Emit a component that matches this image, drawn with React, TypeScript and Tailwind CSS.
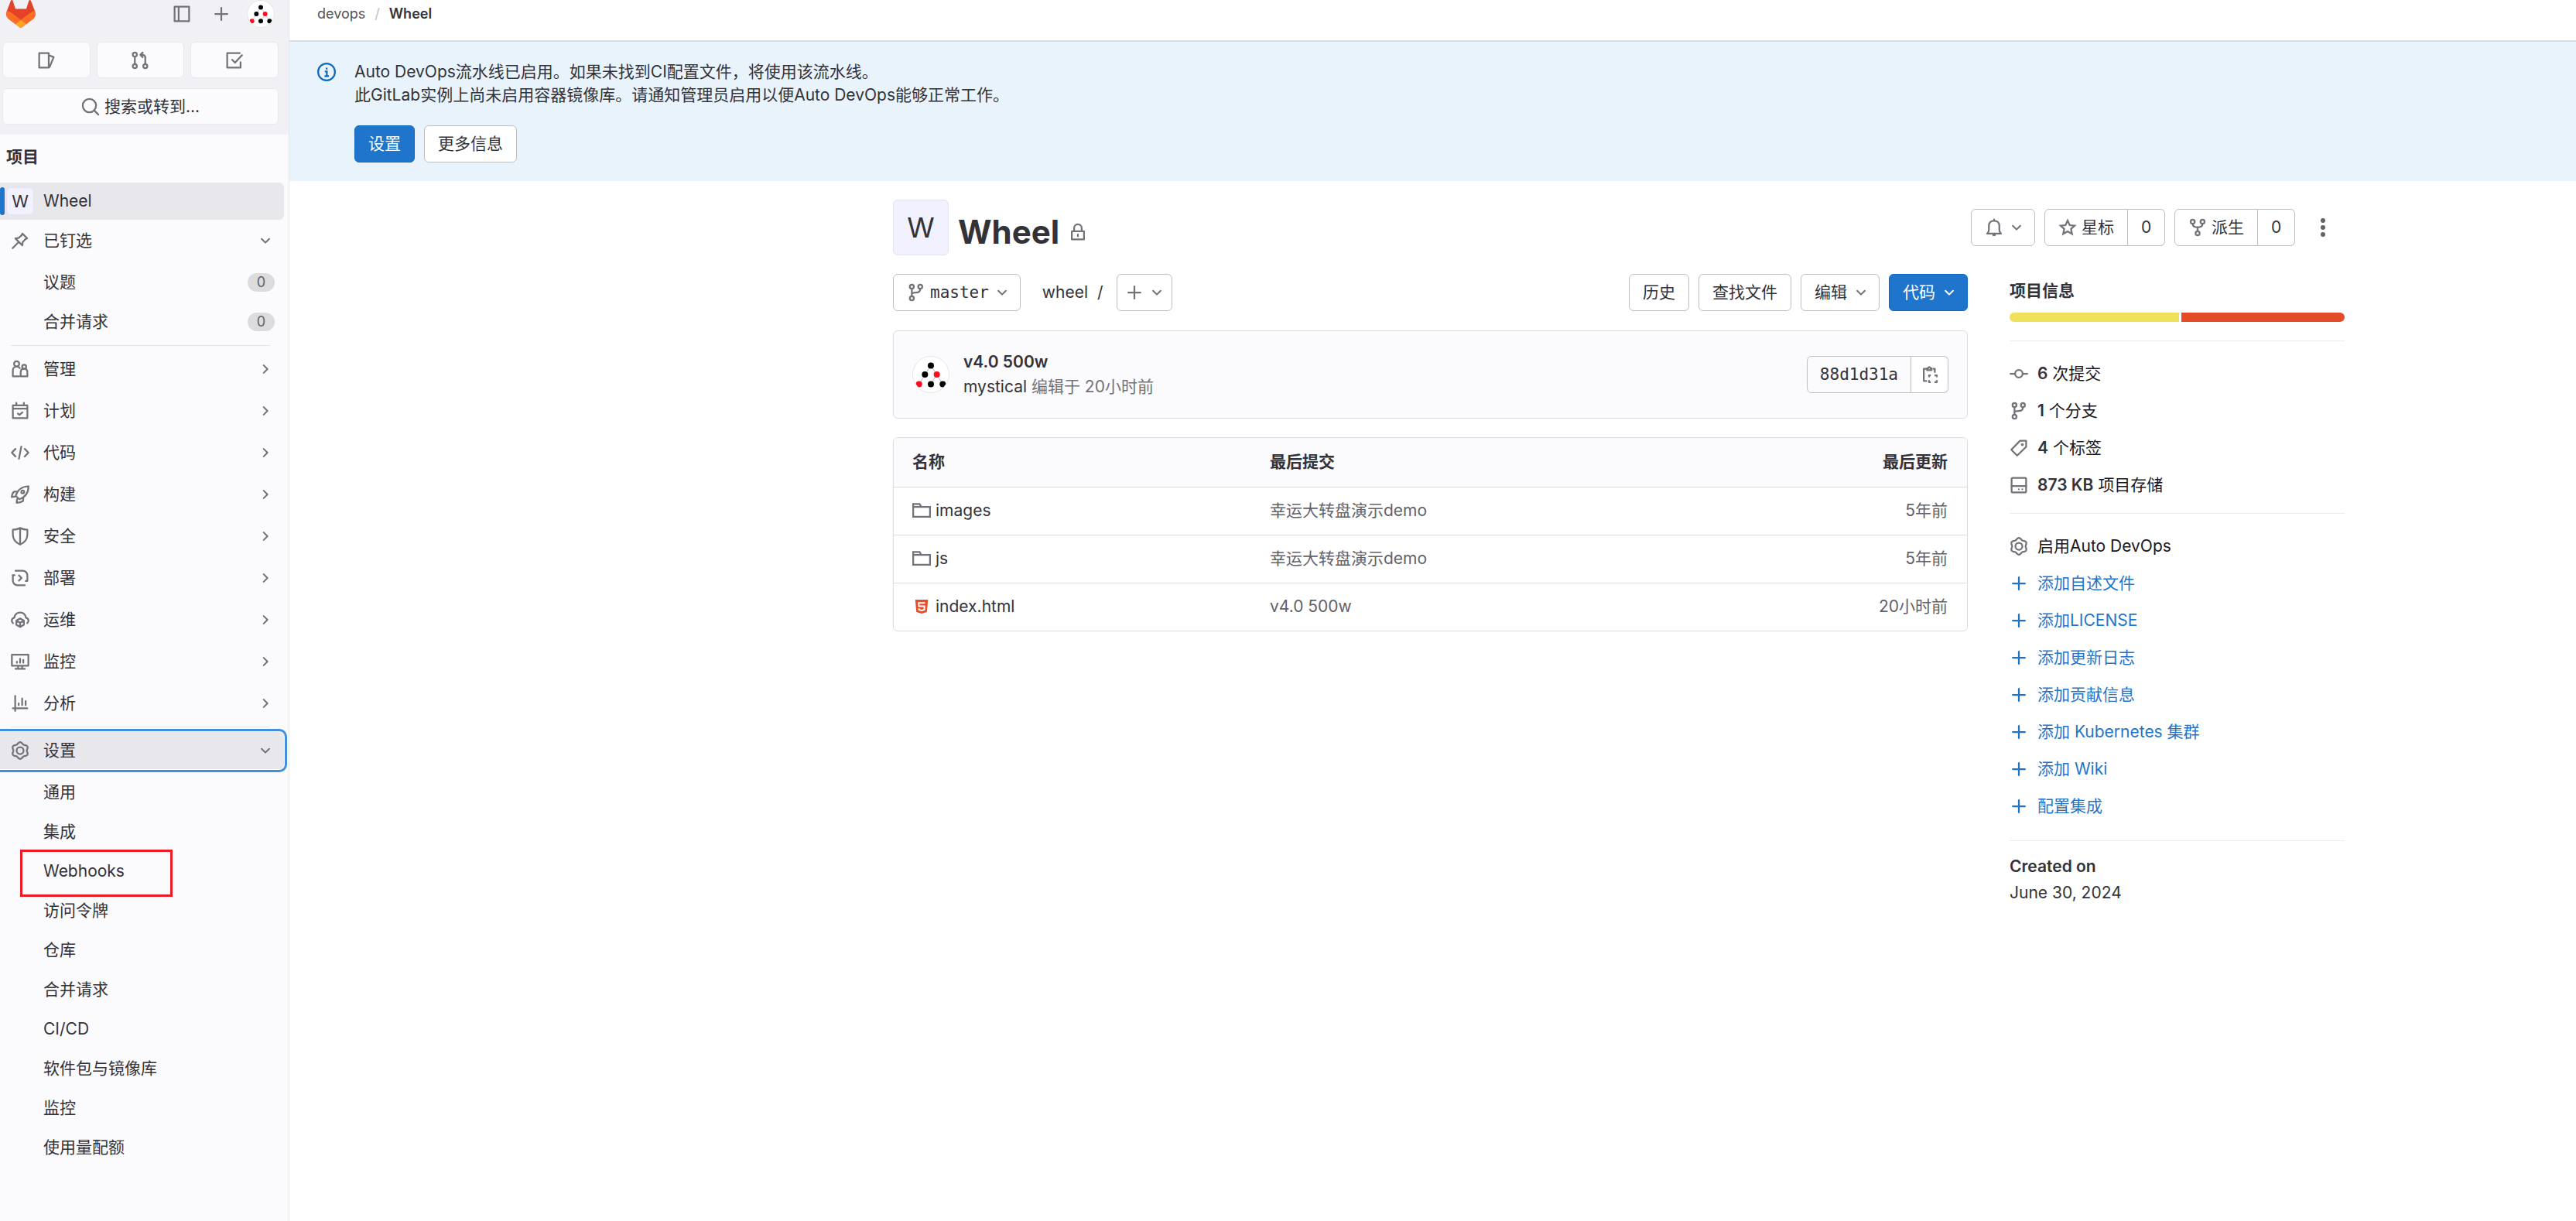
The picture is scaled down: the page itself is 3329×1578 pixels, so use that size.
import type { ReactNode } from "react";

type IconProps = { className?: string; children: ReactNode; box?: string };

function Icon({ className = "size-6", children, box = "0 0 16 16" }: IconProps) {
  return (
    <svg
      className={`shrink-0 ${className}`}
      viewBox={box}
      fill="none"
      stroke="currentColor"
      strokeWidth="1.5"
      strokeLinecap="round"
      strokeLinejoin="round"
      aria-hidden="true"
    >
      {children}
    </svg>
  );
}

const ChevronDown = () => (
  <Icon className="size-[18px]" box="0 0 12 12">
    <path d="M2.75 4.5 6 7.75 9.25 4.5" strokeWidth="1.4" />
  </Icon>
);
const ChevronRight = () => (
  <Icon className="size-[18px]" box="0 0 12 12">
    <path d="M4.5 2.75 7.75 6 4.5 9.25" strokeWidth="1.4" />
  </Icon>
);
const Plus = () => (
  <Icon>
    <path d="M8 2.75v10.5M2.75 8h10.5" />
  </Icon>
);

// Six-lobed outline, one lobe pointing straight up.
const gearOutline = Array.from({ length: 72 }, (_, i) => {
  const angle = (i * Math.PI) / 36;
  const radius = 6.5 + 0.7 * Math.cos(6 * angle);
  return `${(8 + radius * Math.sin(angle)).toFixed(2)},${(8 - radius * Math.cos(angle)).toFixed(2)}`;
}).join(" ");

const Gear = () => (
  <Icon>
    <circle cx="8" cy="8" r="3" />
    <polygon points={gearOutline} />
  </Icon>
);
const Branch = () => (
  <Icon>
    <circle cx="4.25" cy="3" r="1.75" />
    <circle cx="11.5" cy="3" r="1.75" />
    <circle cx="4.25" cy="13" r="1.75" />
    <path d="M4.25 4.75v6.500M11.500 4.750c0 3-1.500 3.250-4 3.250-1.700 0-3 .3-3.250 1.500" />
  </Icon>
);

const navIcons = {
  pin: (
    <Icon>
      <path d="M10 1.900 14.100 6l-1.500.7-2.400 2.700-.3 2.700L3.900 6.100l2.700-.3 2.700-2.400zM6.500 9.500l-5 5" />
    </Icon>
  ),
  manage: (
    <Icon>
      <circle cx="5" cy="3.500" r="2.250" />
      <path d="M7.250 14.250H1.750V9.100C1.750 7 3.200 5.750 5 5.750c1.200 0 2.200.5 2.750 1.450" />
      <circle cx="11.500" cy="6" r="1.750" />
      <path d="M8.500 14.250V10.500c0-1.700 1.200-2.750 2.900-2.750s2.850 1.050 2.850 2.750v3.750z" />
    </Icon>
  ),
  plan: (
    <Icon>
      <path d="M1.750 3.250h12.500v11H1.750zM1.750 6h12.500M4.750 1v2M11.250 1v2M6 10.250l1.400 1.250L10 9.250" />
    </Icon>
  ),
  code: (
    <Icon>
      <path d="M4 4.750.9 8 4 11.250M12 4.750 15.100 8 12 11.250M9 2.750l-2 10.500" />
    </Icon>
  ),
  build: (
    <Icon>
      <path d="M4.200 9.200c1.300-4.200 4.500-8 11-8.200 0 5.800-3.400 9.600-8 11.200zM5.700 5.500H3C1.500 6.500 1 8.300.8 10.300l3-.6M10.800 10.200l-.3 3.500c-1.500 1-3.500 1.400-5.500 1.500l.3-3" />
      <circle cx="10.250" cy="5.900" r="1.250" />
    </Icon>
  ),
  secure: (
    <Icon>
      <path d="M8 .9c2 .9 4 1.400 6.250 1.500v4.100c0 4-2.500 7-6.250 8.700-3.750-1.700-6.250-4.700-6.250-8.700V2.400C4 2.300 6 1.800 8 .9zM8 1v14" />
    </Icon>
  ),
  deploy: (
    <Icon>
      <path d="M4 1.750h6.250a4 4 0 0 1 4 4V10.500h-1.500M1.500 5.500h.25v4.750a4 4 0 0 0 4 4H12M1.750 5.500H3.200M7 5.750 9.250 8 7 10.250" />
    </Icon>
  ),
  operate: (
    <Icon>
      <path d="M1.900 10.900C.2 9.500.5 6.700 3 6.200 3.500 3.300 5.400 1.750 8 1.750s4.500 1.550 5 4.450c2.500.5 2.800 3.300 1.100 4.700M8 6.900l3.250 1.700v3.800L8 14.200l-3.250-1.800V8.600zM4.900 8.800 8 10.500l3.100-1.700M8 10.500v3.500" />
    </Icon>
  ),
  monitor: (
    <Icon>
      <path d="M.9 2h14.200v9.500H.9zM6.250 11.500v2.600M9.750 11.500v2.600M4 14.250h8M5.250 8v1M8 5.500V9M10.750 6.500V9" />
    </Icon>
  ),
  analyze: (
    <Icon>
      <path d="M3.750 1.500v13M1.750 12.250h12.500M6.750 8v1.500M9.750 3.750V9.500M12.750 6v3.500" />
    </Icon>
  ),
  settings: <Gear />,
};

function TreeAvatar({ className }: { className: string }) {
  return (
    <span className={`block shrink-0 overflow-hidden rounded-full border border-[#e6e6ea] bg-white ${className}`}>
      <svg viewBox="0 0 48 48" className="size-full" role="img" aria-label="mystical">
        <path d="M24 12 8 37M24 12l16 25M32 24l-8 13" stroke="#9fa6b8" strokeWidth="0.8" fill="none" />
        <circle cx="24" cy="12" r="4.200" />
        <circle cx="16" cy="24" r="4.200" />
        <circle cx="32" cy="24" r="4.200" fill="#ff0a1e" />
        <circle cx="8" cy="37" r="4.200" fill="#ff0a1e" />
        <circle cx="24" cy="37" r="4.200" />
        <circle cx="40" cy="37" r="4.200" />
      </svg>
    </span>
  );
}

function NavSection({ icon, label, open }: { icon: ReactNode; label: string; open?: boolean }) {
  return (
    <button type="button" className="flex h-12 w-full items-center rounded-r-md pr-[15px] pl-3.5 text-left">
      <span className="text-[#737278]">{icon}</span>
      <span className="ml-[18px] flex-1">{label}</span>
      <span className="text-[#737278]">{open ? <ChevronDown /> : <ChevronRight />}</span>
    </button>
  );
}

function SubItem({ label, count, marked }: { label: string; count?: number; marked?: boolean }) {
  return (
    <li className="relative">
      <a href="#" className="flex h-12 items-center justify-between pr-3 pl-14">
        {label}
        {count !== undefined && (
          <span className="flex h-6 w-[35px] items-center justify-center rounded-full bg-[#dcdcde] text-lg text-[#626168]">
            {count}
          </span>
        )}
      </a>
      {marked && <span className="absolute -top-1 left-[26px] h-[61px] w-[197px] border-3 border-[#ed1c24]" />}
    </li>
  );
}

const sections = [
  { label: "管理", icon: navIcons.manage },
  { label: "计划", icon: navIcons.plan },
  { label: "代码", icon: navIcons.code },
  { label: "构建", icon: navIcons.build },
  { label: "安全", icon: navIcons.secure },
  { label: "部署", icon: navIcons.deploy },
  { label: "运维", icon: navIcons.operate },
  { label: "监控", icon: navIcons.monitor },
  { label: "分析", icon: navIcons.analyze },
];
const settingsItems = ["通用", "集成", "Webhooks", "访问令牌", "仓库", "合并请求", "CI/CD", "软件包与镜像库", "监控", "使用量配额"];

const tile = "flex h-[47px] items-center justify-center rounded-md border border-[#e9e8ed] bg-[#fbfafd]";

function Sidebar() {
  return (
    <aside className="w-[374px] shrink-0 border-r border-[#e7e6eb] bg-[#fbfafd]">
      <div className="bg-[#f1f0f4] pb-[13px] text-[#737278]">
        <div className="flex h-9 items-center pr-[18px] pl-2">
          <a href="#" aria-label="GitLab" className="mr-auto">
            <svg className="h-9 w-[38px]" viewBox="0 0 25 24" aria-hidden="true">
              <path fill="#E24329" d="m24.507 9.5-.034-.09L21.082.562a.896.896 0 0 0-1.694.091l-2.29 7.01H7.825L5.535.653a.898.898 0 0 0-1.694-.09L.451 9.411.416 9.5a6.297 6.297 0 0 0 2.09 7.278l.012.01.03.022 5.16 3.867 2.56 1.935 1.554 1.176a1.051 1.051 0 0 0 1.268 0l1.555-1.176 2.56-1.935 5.197-3.89.014-.01A6.297 6.297 0 0 0 24.507 9.5Z" />
              <path fill="#FC6D26" d="m24.507 9.5-.034-.09a11.44 11.44 0 0 0-4.56 2.051l-7.447 5.632 4.742 3.584 5.197-3.89.014-.01A6.297 6.297 0 0 0 24.507 9.5Z" />
              <path fill="#FCA326" d="m7.707 20.677 2.56 1.935 1.555 1.176a1.051 1.051 0 0 0 1.268 0l1.555-1.176 2.56-1.935-4.743-3.584-4.755 3.584Z" />
              <path fill="#FC6D26" d="M5.01 11.461a11.43 11.43 0 0 0-4.56-2.05L.416 9.5a6.297 6.297 0 0 0 2.09 7.278l.012.01.03.022 5.16 3.867 4.745-3.584-7.444-5.632Z" />
            </svg>
          </a>
          <button type="button" aria-label="侧边栏">
            <Icon>
              <path d="M1.750 1.750h12.500v12.500H1.750zM5.250 1.750v12.500" />
            </Icon>
          </button>
          <button type="button" aria-label="新建" className="ml-[27px]">
            <Plus />
          </button>
          <button type="button" aria-label="用户" className="ml-[21px]">
            <TreeAvatar className="size-9" />
          </button>
        </div>
        <div className="mt-[18px] mr-[13px] ml-[3px] grid grid-cols-3 gap-2">
          <a href="#" aria-label="议题" className={tile}>
            <Icon>
              <path d="M1.750 1.750H10v12.500H1.750zM10 3.500l4.250 1.750-3.500 8.500" />
            </Icon>
          </a>
          <a href="#" aria-label="合并请求" className={tile}>
            <Icon>
              <circle cx="3.500" cy="3" r="1.750" />
              <circle cx="3.500" cy="13" r="1.750" />
              <circle cx="12.500" cy="13" r="1.750" />
              <path d="M3.500 4.750v6.500M12.500 11.250V5.500a2.250 2.250 0 0 0-2.250-2.250H8.500M10.250 1.250l-2 2 2 2" />
            </Icon>
          </a>
          <a href="#" aria-label="待办事项" className={tile}>
            <Icon>
              <path d="M12.500 1.750H1.750v12.500h11.500V9.500M6 7.500l2.500 2.500 6-6.500" />
            </Icon>
          </a>
        </div>
        <button type="button" className={`mt-[13px] mr-[13px] ml-[3px] w-[357px] gap-1.5 text-[#333238] ${tile}`}>
          <span className="text-[#737278]">
            <Icon>
              <circle cx="7" cy="7" r="5.750" />
              <path d="m11.250 11.250 3.500 3.500" />
            </Icon>
          </span>
          搜索或转到...
        </button>
      </div>

      <nav aria-label="项目">
        <h2 className="px-2 pt-3.5 pb-[18px] font-bold leading-[30px]">项目</h2>
        <a href="#" className="relative flex h-12 w-[367px] items-center rounded-r-md bg-[#e8e7ec] pl-2">
          <span className="absolute top-1.5 left-0 h-9 w-1.5 rounded-full bg-[#1f75cb]" />
          <span className="flex size-9 items-center justify-center rounded-md border border-[#e3e1f5] bg-[#f1f1ff] text-[22px]">W</span>
          <span className="ml-3">Wheel</span>
        </a>
        <div className="mt-[3px] w-[367px]">
          <NavSection icon={navIcons.pin} label="已钉选" open />
          <ul className="mt-1.5 space-y-[3px]">
            <SubItem label="议题" count={0} />
            <SubItem label="合并请求" count={0} />
          </ul>
        </div>
        <hr className="mx-3.5 my-1.5 w-[335px] border-[#e4e3e8]" />
        <div className="w-[367px] space-y-1.5">
          {sections.map((s) => (
            <NavSection key={s.label} icon={s.icon} label={s.label} />
          ))}
        </div>
        <hr className="mx-3.5 my-1.5 w-[335px] border-[#e4e3e8]" />
        <div className="w-[367px] rounded-r-md bg-[#e8e7ec] outline-3 outline-offset-1 outline-[#428fdc]">
          <NavSection icon={navIcons.settings} label="设置" open />
        </div>
        <ul className="mt-1.5 w-[367px] space-y-[3px]">
          {settingsItems.map((s) => (
            <SubItem key={s} label={s} marked={s === "Webhooks"} />
          ))}
        </ul>
      </nav>
    </aside>
  );
}

const btnBase = "flex h-12 items-center rounded-md border";
const btn = `${btnBase} border-[#bfbfc3] bg-white px-[17px]`;
const dropdown = `${btnBase} border-[#bfbfc3] bg-white pr-3.5 pl-[17px]`;
const primary = `${btnBase} border-[#1068bf] bg-[#1f75cb] px-[17px] text-white`;
const primaryDropdown = `${btnBase} border-[#1068bf] bg-[#1f75cb] pr-3.5 pl-[17px] text-white`;
const split = "flex h-12 items-center border-y border-r border-[#bfbfc3] bg-white";

function ProjectHeader() {
  return (
    <div className="flex items-center">
      <span className="flex size-[72px] items-center justify-center rounded-md border border-[#e3e1f5] bg-[#f1f1ff] text-4xl">W</span>
      <h1 className="mt-3 ml-3 text-[42px] leading-[52px] font-bold">Wheel</h1>
      <span className="mt-3 ml-3 text-[#737278]">
        <Icon>
          <path d="M2.750 7.250h10.500v7H2.750zM4.750 7V4.500a3.250 3.250 0 0 1 6.500 0V7M8 10v1.500" />
        </Icon>
      </span>
      <div className="ml-auto flex items-center gap-3 pr-1">
        <button type="button" aria-label="通知" className={`gap-2 text-[#737278] ${dropdown}`}>
          <Icon>
            <path d="M2 13.250c1.300-1 1.500-2 1.500-3.500V6.500C3.500 4 5.200 2.200 8 2.200s4.500 1.800 4.500 4.300v3.250c0 1.500.2 2.500 1.500 3.500zM8 1v1M7.200 14.500h1.600" />
          </Icon>
          <ChevronDown />
        </button>
        <div className="flex">
          <button type="button" className={`gap-1.5 rounded-l-md border-l px-[17px] ${split}`}>
            <span className="text-[#737278]">
              <Icon>
                <path strokeLinejoin="miter" d="m8 2 1.800 4 4.300.400-3.200 2.900.9 4.200L8 11.300l-3.800 2.200.9-4.200L1.900 6.400 6.200 6z" />
              </Icon>
            </span>
            星标
          </button>
          <a href="#" className={`w-12 justify-center rounded-r-md ${split}`}>0</a>
        </div>
        <div className="flex">
          <button type="button" className={`gap-1.5 rounded-l-md border-l px-[17px] ${split}`}>
            <span className="text-[#737278]">
              <Icon>
                <circle cx="3.750" cy="3" r="1.750" />
                <circle cx="12.250" cy="3" r="1.750" />
                <circle cx="8" cy="13" r="1.750" />
                <path d="M3.750 4.750C3.750 7 5 7.750 8 7.750s4.250-.75 4.250-3M8 7.750v3.500" />
              </Icon>
            </span>
            派生
          </button>
          <a href="#" className={`w-12 justify-center rounded-r-md ${split}`}>0</a>
        </div>
        <button type="button" aria-label="更多操作" className="flex size-12 items-center justify-center text-[#626168]">
          <svg viewBox="0 0 16 16" className="size-6" fill="currentColor" aria-hidden="true">
            <circle cx="8" cy="2" r="2" />
            <circle cx="8" cy="8" r="2" />
            <circle cx="8" cy="14" r="2" />
          </svg>
        </button>
      </div>
    </div>
  );
}

const folder = (
  <Icon>
    <path strokeLinejoin="miter" d="M.75 13.250V2.250h5.500l1.500 2.500h7.500v8.500zM.75 4.750h7" />
  </Icon>
);
const html5 = (
  <svg viewBox="0 0 16 16" className="size-6 shrink-0" aria-hidden="true">
    <path fill="#e44d26" d="M2.500 2h11l-1 10.700L8 14l-4.500-1.300z" />
    <path fill="none" stroke="#fff" strokeWidth="1.300" d="M11 4.800H5.500l.2 2.900h4.800l-.2 2.900-2.300.7-2.300-.7-.1-1" />
  </svg>
);
const files = [
  { icon: folder, name: "images", commit: "幸运大转盘演示demo", when: "5年前" },
  { icon: folder, name: "js", commit: "幸运大转盘演示demo", when: "5年前" },
  { icon: html5, name: "index.html", commit: "v4.0 500w", when: "20小时前" },
];

function Repository() {
  return (
    <div className="min-w-0 flex-1">
      <div className="flex items-center">
        <button type="button" className={`gap-1.5 font-['DejaVu_Sans_Mono',monospace] ${dropdown}`}>
          <span className="text-[#737278]">
            <Branch />
          </span>
          master
          <span className="ml-0.5 text-[#737278]">
            <ChevronDown />
          </span>
        </button>
        <a href="#" className="ml-7">wheel</a>
        <span className="ml-3">/</span>
        <button type="button" aria-label="添加到目录" className="ml-[17px] flex h-12 w-[72px] items-center justify-center gap-2 rounded-md border border-[#bfbfc3] text-[#737278]">
          <Plus />
          <ChevronDown />
        </button>
        <div className="ml-auto flex gap-3">
          <a href="#" className={btn}>历史</a>
          <a href="#" className={btn}>查找文件</a>
          <button type="button" className={`gap-[9px] ${dropdown}`}>
            编辑
            <span className="text-[#737278]">
              <ChevronDown />
            </span>
          </button>
          <button type="button" className={`gap-[9px] ${primaryDropdown}`}>
            代码
            <ChevronDown />
          </button>
        </div>
      </div>

      <div className="mt-[25px] flex items-center rounded-md border border-[#dcdcde] bg-[#fbfafd] px-6 py-6">
        <TreeAvatar className="size-12" />
        <div className="ml-[18px] leading-8">
          <a href="#" className="block font-semibold">v4.0 500w</a>
          <p className="text-[#737278]">
            <a href="#" className="text-[#333238]">mystical</a> 编辑于 20小时前
          </p>
        </div>
        <div className="ml-auto flex">
          <span className="flex h-12 items-center rounded-l-md border border-[#bfbfc3] px-4 font-['DejaVu_Sans_Mono',monospace]">
            88d1d31a
          </span>
          <button type="button" aria-label="复制提交 SHA" className={`w-12 justify-center rounded-r-md text-[#737278] ${split}`}>
            <Icon>
              <path strokeLinecap="butt" d="M5.500 13.500H2.750V3H5M10.500 3h1.750v3.500" />
              <path d="M5.500 4.250V2.750h1l.4-1h1.200l.4 1h1v1.500z" />
              <path strokeLinecap="butt" d="M7.250 10.250V8.750H8.800M12 8.750h2v1.500M14 12.750v1.750h-2M8.800 14.500H7.250v-1.750" />
            </Icon>
          </button>
        </div>
      </div>

      <div className="mt-6 overflow-hidden rounded-md border border-[#dcdcde]">
        <table className="w-full table-fixed text-left">
          <thead>
            <tr className="h-[63px] bg-[#fbfafd]">
              <th className="w-[462px] pl-6 font-bold">名称</th>
              <th className="pl-6 font-bold">最后提交</th>
              <th className="w-[300px] pr-[25px] text-right font-bold">最后更新</th>
            </tr>
          </thead>
          <tbody>
            {files.map((f) => (
              <tr key={f.name} className="h-[62px] border-t border-[#dcdcde] text-[#626168]">
                <td className="pl-6">
                  <a href="#" className="flex items-center gap-1.5 text-[#333238]">
                    <span className="text-[#737278]">{f.icon}</span>
                    {f.name}
                  </a>
                </td>
                <td className="pl-6">
                  <a href="#">{f.commit}</a>
                </td>
                <td className="pr-[25px] text-right">{f.when}</td>
              </tr>
            ))}
          </tbody>
        </table>
      </div>
    </div>
  );
}

const stats = [
  {
    value: "6",
    unit: "次提交",
    icon: (
      <Icon>
        <circle cx="8" cy="8" r="3.250" />
        <path d="M.75 8h4M11.250 8h4" />
      </Icon>
    ),
  },
  { value: "1", unit: "个分支", icon: <Branch /> },
  {
    value: "4",
    unit: "个标签",
    icon: (
      <Icon>
        <path d="M9 1.750h5.250V7L6.500 14.500 1.500 9.500z" />
        <circle cx="11" cy="5" r=".5" />
      </Icon>
    ),
  },
  {
    value: "873 KB",
    unit: "项目存储",
    icon: (
      <Icon>
        <rect x="1.750" y="1.750" width="12.500" height="12.500" rx="1" />
        <path d="M1.750 8.750h12.500M8 11.500h.01M11 11.500h.01" />
      </Icon>
    ),
  },
];
const quickLinks = ["添加自述文件", "添加LICENSE", "添加更新日志", "添加贡献信息", "添加 Kubernetes 集群", "添加 Wiki", "配置集成"];

function ProjectInfo() {
  return (
    <aside className="w-[433px] shrink-0">
      <h2 className="pt-[7px] leading-[30px] font-bold">项目信息</h2>
      <div className="mt-[13px] flex h-3 gap-[3px] overflow-hidden rounded-md">
        <span className="w-[219px] bg-[#f1e05a]" />
        <span className="flex-1 bg-[#e34c26]" />
      </div>
      <ul className="mt-6 border-t border-[#ececef] pt-[18px] text-[#18171d]">
        {stats.map((s) => (
          <li key={s.unit}>
            <a href="#" className="flex h-12 items-center gap-3">
              <span className="text-[#737278]">{s.icon}</span>
              <span>
                <strong className="font-semibold text-[#333238]">{s.value}</strong> {s.unit}
              </span>
            </a>
          </li>
        ))}
      </ul>
      <ul className="mt-3 border-t border-[#ececef] pt-[18px] text-[#1f75cb]">
        <li>
          <a href="#" className="flex h-12 items-center gap-3 text-[#18171d]">
            <span className="text-[#737278]">
              <Gear />
            </span>
            启用Auto DevOps
          </a>
        </li>
        {quickLinks.map((l) => (
          <li key={l}>
            <a href="#" className="flex h-12 items-center gap-3">
              <Plus />
              {l}
            </a>
          </li>
        ))}
      </ul>
      <div className="mt-5 border-t border-[#ececef] pt-4 leading-[34px]">
        <h3 className="font-semibold">Created on</h3>
        <p>June 30, 2024</p>
      </div>
    </aside>
  );
}

export default function App() {
  return (
    <div className="flex min-h-screen bg-white font-['Inter','Noto_Sans_CJK_SC',sans-serif] text-[21px] leading-[30px] text-[#333238]">
      <Sidebar />
      <div className="min-w-0 flex-1">
        <nav aria-label="面包屑" className="flex h-[54px] items-start gap-3 border-b-2 border-[#dcdcde] px-9 pt-[3px] text-lg leading-[30px]">
          <a href="#" className="text-[#535158]">devops</a>
          <span className="text-[#bfbfc3]">/</span>
          <a href="#" className="font-semibold">Wheel</a>
        </nav>
        <section className="flex bg-[#e9f3fc] px-9 py-6">
          <span className="mt-[3px] text-[#1068bf]">
            <Icon>
              <circle cx="8" cy="8" r="7.250" />
              <path strokeLinecap="butt" strokeLinejoin="miter" d="M6.500 7.500h1.750v4M6.250 11.500h3.750M8.100 4.250v1.500" />
            </Icon>
          </span>
          <div className="ml-6">
            <p>
              Auto DevOps流水线已启用。如果未找到CI配置文件，将使用该流水线。
              <br />
              此GitLab实例上尚未启用容器镜像库。请通知管理员启用以便Auto DevOps能够正常工作。
            </p>
            <div className="mt-6 flex gap-3">
              <a href="#" className={primary}>设置</a>
              <a href="#" className={btn}>更多信息</a>
            </div>
          </div>
        </section>
        <main className="mr-[299px] ml-auto max-w-[1876px] pt-6">
          <ProjectHeader />
          <div className="mt-6 flex gap-[54px]">
            <Repository />
            <ProjectInfo />
          </div>
        </main>
      </div>
    </div>
  );
}
